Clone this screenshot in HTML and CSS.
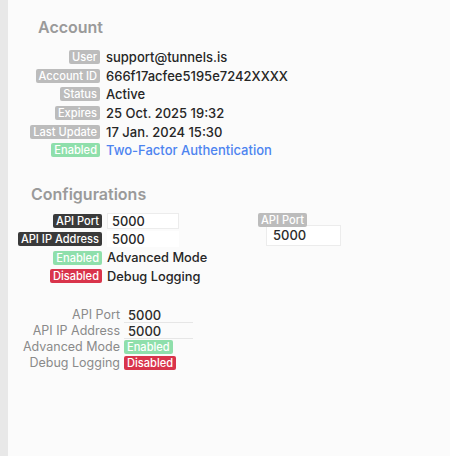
FILE: index.html
```html
<!DOCTYPE html>
<html>
<head>
<meta charset="utf-8">
<link rel="stylesheet" href="styles.css">
</head>
<body>
<div class="strip"></div>
<main class="main">
  <section class="account">
    <h2 class="title title-account">Account</h2>
    <div class="grid grid-account">
      <span class="lbl"><span class="badge gray">User</span></span><span class="val">support@tunnels.is</span>
      <span class="lbl"><span class="badge gray">Account ID</span></span><span class="val">666f17acfee5195e7242XXXX</span>
      <span class="lbl"><span class="badge gray">Status</span></span><span class="val">Active</span>
      <span class="lbl"><span class="badge gray">Expires</span></span><span class="val">25 Oct. 2025 19:32</span>
      <span class="lbl"><span class="badge gray">Last Update</span></span><span class="val">17 Jan. 2024 15:30</span>
      <span class="lbl"><span class="badge green">Enabled</span></span><span class="val link">Two-Factor Authentication</span>
    </div>
  </section>

  <section class="config">
    <h2 class="title title-config">Configurations</h2>
    <div class="config-row">
      <div class="grid grid-config">
        <span class="lbl"><span class="badge dark">API Port</span></span><span class="val"><span class="box bordered">5000</span></span>
        <span class="lbl"><span class="badge dark">API IP Address</span></span><span class="val"><span class="box">5000</span></span>
        <span class="lbl"><span class="badge green">Enabled</span></span><span class="val">Advanced Mode</span>
        <span class="lbl"><span class="badge red">Disabled</span></span><span class="val">Debug Logging</span>
      </div>
      <div class="float-field">
        <span class="badge gray float-label">API Port</span>
        <span class="float-input">5000</span>
      </div>
    </div>
  </section>

  <section class="plain">
    <div class="grid grid-plain">
      <span class="plbl">API Port</span><span class="pval"><span class="uline">5000</span></span>
      <span class="plbl">API IP Address</span><span class="pval"><span class="uline">5000</span></span>
      <span class="plbl tall">Advanced Mode</span><span class="pval tall"><span class="badge green">Enabled</span></span>
      <span class="plbl tall">Debug Logging</span><span class="pval tall"><span class="badge red">Disabled</span></span>
    </div>
  </section>
</main>
</body>
</html>
```

FILE: styles.css
```css
* { box-sizing: border-box; }
html, body { margin: 0; padding: 0; height: 100%; }
body {
  display: flex;
  font-family: Inter, "Liberation Sans", sans-serif;
  background: #fbfbfb;
  color: #2b2b2b;
}
.strip {
  width: 8px;
  flex: none;
  background: #e8e8e8;
}
.main {
  flex: 1;
  background: #fbfbfb;
  padding-top: 17px;
}
.title {
  margin: 0;
  font-size: 16px;
  line-height: 20px;
  font-weight: 600;
  color: #9a9a9a;
}
.title-account { padding-left: 30px; }
.title-config { padding-left: 23px; }

.grid {
  display: grid;
  align-items: center;
}
.grid-account {
  margin-top: 11px;
  grid-template-columns: 92px auto;
  column-gap: 6px;
  grid-auto-rows: 18.6px;
}
.lbl { display: flex; justify-content: flex-end; }
.val {
  font-size: 13px;
  font-weight: 500;
  color: #262626;
  white-space: nowrap;
}
.link { color: #4d84f0; }

.badge {
  display: inline-block;
  font-size: 11.1px;
  line-height: 14px;
  height: 14px;
  padding: 0 3px;
  border-radius: 2px;
  color: #fff;
  font-weight: 500;
  white-space: nowrap;
}
.gray { background: #bcbcbc; }
.dark { background: #3a3a3a; }
.green { background: #8fdfab; }
.red { background: #d9344b; }

.config { margin-top: 24px; }
.config-row {
  display: flex;
  margin-top: 8px;
}
.grid-config {
  grid-template-columns: 94px auto;
  column-gap: 5px;
  grid-auto-rows: 18.5px;
  width: 250px;
}
.grid-config .val { font-size: 12.8px; }
.box {
  display: inline-block;
  width: 72px;
  height: 16px;
  line-height: 15px;
  padding-left: 4px;
  background: #fff;
  border: 1px solid transparent;
}
.box.bordered { border-color: #ececec; }

.float-field {
  display: flex;
  flex-direction: column;
  align-items: flex-start;
  margin-top: 1px;
}
.float-label {
  position: relative;
  z-index: 1;
}
.float-input {
  margin-top: -2px;
  margin-left: 8px;
  width: 75px;
  height: 21px;
  line-height: 19px;
  padding-left: 6px;
  background: #fff;
  border: 1px solid #ececec;
  font-size: 13px;
  font-weight: 500;
}

.plain { margin-top: 21px; }
.grid-plain {
  grid-template-columns: 112px auto;
  column-gap: 4px;
}
.plbl {
  text-align: right;
  font-size: 12.5px;
  line-height: 15px;
  color: #8a8a8a;
  white-space: nowrap;
}
.pval { font-size: 13px; font-weight: 500; }
.uline {
  display: inline-block;
  width: 69px;
  height: 15px;
  line-height: 14px;
  padding-left: 4px;
  border-bottom: 1px solid #e6e6e6;
}
.tall { height: 16.5px; line-height: 16.5px; display: flex; align-items: center; }
.plbl.tall { justify-content: flex-end; }
```
